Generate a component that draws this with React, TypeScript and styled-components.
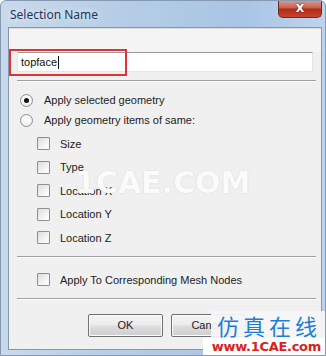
import React from "react";
import styled, { createGlobalStyle } from "styled-components";

const GlobalStyle = createGlobalStyle`
  html, body { margin: 0; padding: 0; }
  body { width: 326px; height: 356px; overflow: hidden; background: #fff; }
`;

const Frame = styled.div`
  position: relative;
  width: 326px;
  height: 356px;
  box-sizing: border-box;
  display: flex;
  flex-direction: column;
  background: linear-gradient(to right, #c9d9eb 0%, #b4cce6 40%, #a9c5e4 75%, #bcd4ee 100%);
  border: 1px solid #8799b0;
  border-radius: 6px 6px 0 0;
  overflow: hidden;
  font-family: "Liberation Sans", Arial, sans-serif;
`;

const TitleBar = styled.div`
  height: 26px;
  display: flex;
  align-items: flex-start;
  flex-shrink: 0;
`;

const Title = styled.div`
  font-family: "Noto Sans", "Open Sans", sans-serif;
  font-size: 12px;
  color: #23365a;
  padding: 5px 0 0 9px;
  text-shadow: 0 0 6px rgba(255, 255, 255, 0.9);
`;

const CloseButton = styled.div`
  margin-left: auto;
  margin-right: 3px;
  margin-top: -1px;
  width: 44px;
  height: 18px;
  box-sizing: border-box;
  border: 1px solid #6b2a22;
  border-top: none;
  border-radius: 0 0 5px 5px;
  background: linear-gradient(to bottom, #dc9f94 0%, #c9624f 45%, #b42a18 55%, #c4462f 100%);
  display: flex;
  align-items: center;
  justify-content: center;
  color: #fff;
  font-family: "DejaVu Sans", sans-serif;
  font-weight: bold;
  font-size: 11px;
  text-shadow: 0 0 2px #5a1a10;
`;

const Client = styled.div`
  flex: 1;
  margin: 0 3px 5px 7px;
  background: #f0f0f0;
  border: 1px solid #8597ad;
  display: flex;
  flex-direction: column;
  padding: 0 5px 0 8px;
  position: relative;
`;

const TopStrip = styled.div`
  height: 23px;
  margin: 0 -5px 0 -8px;
  background: #f4f4f4;
  border-top: 1px solid #dcdcdc;
`;

const NameInput = styled.div`
  height: 20px;
  margin-right: 3px;
  box-sizing: border-box;
  background: #fff;
  border: 1px solid #e2e5ea;
  border-top: 1px solid #9a9ca1;
  display: flex;
  align-items: center;
  padding-left: 3px;
  font-size: 11px;
  color: #111;
`;

const Caret = styled.span`
  display: inline-block;
  width: 1px;
  height: 13px;
  background: #111;
  margin-left: 1px;
`;

const Separator = styled.div<{ $top: number }>`
  margin-top: ${(p) => p.$top}px;
  height: 0;
  border-top: 1px solid #a0a0a0;
  border-bottom: 1px solid #ffffff;
`;

const Row = styled.div<{ $h: number; $indent: number; $top?: number }>`
  height: ${(p) => p.$h}px;
  margin-top: ${(p) => p.$top ?? 0}px;
  display: flex;
  align-items: center;
  padding-left: ${(p) => p.$indent}px;
  font-size: 11px;
  color: #222;
`;

const Radio = styled.span<{ $checked?: boolean }>`
  width: 13px;
  height: 13px;
  box-sizing: border-box;
  border-radius: 50%;
  border: 1px solid #8e8f8f;
  background: radial-gradient(circle at 50% 40%, #ffffff 0%, #f2f2f2 60%, #dcdcdc 100%);
  display: flex;
  align-items: center;
  justify-content: center;
  margin-right: 11px;
  &::after {
    content: "";
    display: ${(p) => (p.$checked ? "block" : "none")};
    width: 5px;
    height: 5px;
    border-radius: 50%;
    background: #111;
  }
`;

const Check = styled.span`
  width: 13px;
  height: 13px;
  box-sizing: border-box;
  border: 1px solid #8e8f8f;
  border-radius: 1px;
  background: linear-gradient(135deg, #dcdcdc 0%, #f4f4f4 60%, #ffffff 100%);
  margin-right: 10px;
`;

const List = styled.div`
  margin-top: 2px;
  display: flex;
  flex-direction: column;
`;

const ButtonRow = styled.div`
  margin-top: 14px;
  display: flex;
  gap: 8px;
  padding-left: 71px;
`;

const Button = styled.div`
  width: 75px;
  height: 23px;
  box-sizing: border-box;
  border: 1px solid #707070;
  border-radius: 2px;
  background: linear-gradient(to bottom, #f4f4f4 0%, #ebebeb 48%, #dddddd 52%, #cfcfcf 100%);
  box-shadow: inset 0 0 0 1px #fcfcfc;
  display: flex;
  align-items: center;
  justify-content: center;
  font-size: 11px;
  color: #222;
`;

const Annotation = styled.div`
  position: absolute;
  left: 8px;
  top: 48px;
  width: 118px;
  height: 27px;
  box-sizing: border-box;
  border: 2px solid #e03434;
  pointer-events: none;
`;

const CenterMark = styled.div`
  position: absolute;
  left: 74px;
  top: 164px;
  font-family: "DejaVu Sans", sans-serif;
  font-weight: bold;
  font-size: 30px;
  color: rgba(255, 255, 255, 0.95);
  text-shadow: 0 0 1px rgba(160, 160, 160, 0.55);
  pointer-events: none;
  white-space: nowrap;
`;

const CornerMark = styled.div`
  position: absolute;
  right: 0;
  bottom: 0;
  width: 114px;
  height: 44px;
  display: flex;
  flex-direction: column;
  align-items: flex-end;
  background: rgba(246, 246, 246, 0.92);
  pointer-events: none;
`;

const CornerCJK = styled.div`
  font-family: "Noto Sans CJK SC", sans-serif;
  font-size: 22px;
  line-height: 26px;
  letter-spacing: 4px;
  white-space: nowrap;
  color: #1b7fd9;
  padding-right: 4px;
  margin-top: 1px;
`;

const CornerUrlWrap = styled.div`
  position: absolute;
  right: 0;
  bottom: 0;
  pointer-events: none;
`;

const CornerUrl = styled.div`
  width: 122px;
  height: 17px;
  background: #fff;
  font-family: "DejaVu Sans", sans-serif;
  font-weight: bold;
  font-size: 13px;
  line-height: 17px;
  color: #d9221b;
  text-align: right;
  padding-right: 4px;
  box-sizing: border-box;
  letter-spacing: -0.3px;
  white-space: nowrap;
`;

const items = ["Size", "Type", "Location X", "Location Y", "Location Z"];

export default function App() {
  return (
    <>
      <GlobalStyle />
      <Frame>
        <TitleBar>
          <Title>Selection Name</Title>
          <CloseButton>X</CloseButton>
        </TitleBar>
        <Client>
          <TopStrip />
          <NameInput>
            topface
            <Caret />
          </NameInput>
          <Separator $top={8} />
          <Row $h={20} $indent={3} $top={8}>
            <Radio $checked />
            Apply selected geometry
          </Row>
          <Row $h={20} $indent={3}>
            <Radio />
            Apply geometry items of same:
          </Row>
          <List>
            {items.map((t) => (
              <Row key={t} $h={23.5} $indent={20}>
                <Check />
                {t}
              </Row>
            ))}
          </List>
          <Separator $top={6} />
          <Row $h={24} $indent={20} $top={10}>
            <Check />
            Apply To Corresponding Mesh Nodes
          </Row>
          <Separator $top={6} />
          <ButtonRow>
            <Button>OK</Button>
            <Button>Cancel</Button>
          </ButtonRow>
        </Client>
        <Annotation />
        <CenterMark>1CAE.COM</CenterMark>
        <CornerMark>
          <CornerCJK>仿真在线</CornerCJK>
        </CornerMark>
        <CornerUrlWrap>
          <CornerUrl>www.1CAE.com</CornerUrl>
        </CornerUrlWrap>
      </Frame>
    </>
  );
}
